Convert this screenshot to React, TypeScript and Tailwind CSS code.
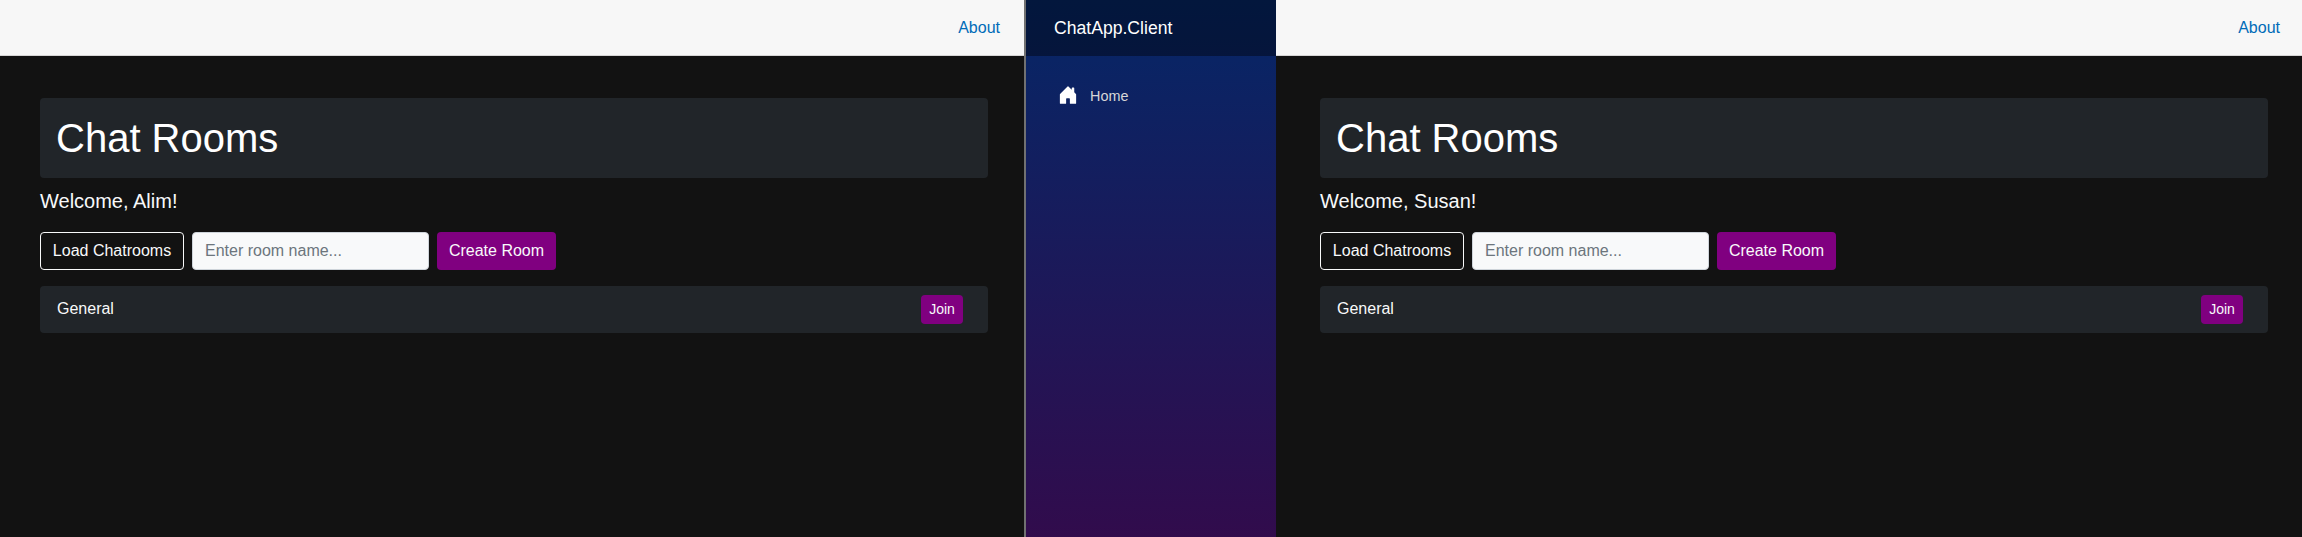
import React from "react";

function TopBar({ className }: { className: string }) {
  return (
    <header
      className={`flex h-14 shrink-0 items-center justify-end border-b border-[#d6d5d5] bg-[#f7f7f7] ${className}`}
    >
      <a href="#" className="text-base text-[#006bb7]">
        About
      </a>
    </header>
  );
}

function ChatRooms({ user, className }: { user: string; className: string }) {
  return (
    <div className={`pt-[42px] text-[#f8f9fa] ${className}`}>
      <div className="w-[948px]">
        <div className="rounded bg-[#212529] p-4">
          <h1 className="text-[40px] leading-[48px] text-white">Chat Rooms</h1>
        </div>
        <h5 className="mt-[11px] text-xl leading-6">Welcome, {user}!</h5>
        <div className="mt-[19px] flex gap-2">
          <button className="h-[38px] w-36 rounded border border-[#f8f9fa] text-base leading-6">
            Load Chatrooms
          </button>
          <input
            type="text"
            placeholder="Enter room name..."
            className="h-[38px] w-[237px] rounded border border-[#ced4da] bg-[#f8f9fa] px-3 text-base text-[#212529] placeholder:text-[#6c757d]"
          />
          <button className="h-[38px] w-[119px] rounded bg-[#800080] text-base leading-6">
            Create Room
          </button>
        </div>
        <ul className="mt-4">
          <li className="flex h-[47px] items-center justify-between rounded bg-[#212529] pr-[25px] pl-[17px]">
            <span className="pb-0.5 text-base">General</span>
            <button className="h-[29px] w-[42px] rounded bg-[#800080] pb-px text-sm leading-5">
              Join
            </button>
          </li>
        </ul>
      </div>
    </div>
  );
}

function Sidebar() {
  return (
    <nav className="w-[250px] shrink-0 bg-[linear-gradient(180deg,#052767_0px,#3a0647_643px)]">
      <div className="flex h-14 items-center bg-black/40 pl-7">
        <a href="#" className="text-[17.6px] text-white">
          ChatApp.Client
        </a>
      </div>
      <a href="#" className="mt-4 flex h-12 items-center pl-8 text-[#d7d7d7]">
        <svg
          viewBox="0 0 16 16"
          className="mr-3 -mt-0.5 h-5 w-5 fill-white"
        >
          <path d="M6.5 14.5v-3.505c0-.245.25-.495.5-.495h2c.25 0 .5.25.5.5v3.5a.5.5 0 0 0 .5.5h4a.5.5 0 0 0 .5-.5v-7a.5.5 0 0 0-.146-.354L13 5.793V2.5a.5.5 0 0 0-.5-.5h-1a.5.5 0 0 0-.5.5v1.293L8.354 1.146a.5.5 0 0 0-.708 0l-6 6A.5.5 0 0 0 1.5 7.5v7a.5.5 0 0 0 .5.5h4a.5.5 0 0 0 .5-.5Z" />
        </svg>
        <span className="pt-0.5 text-[14.4px]">Home</span>
      </a>
    </nav>
  );
}

export default function App() {
  return (
    <div className="flex h-[537px] w-[2302px] overflow-hidden bg-[#121212] font-['Liberation_Sans',Arial,sans-serif]">
      <main className="w-[1024px] shrink-0">
        <TopBar className="pr-6" />
        <ChatRooms user="Alim" className="pl-10" />
      </main>
      <div className="w-0.5 shrink-0 bg-[#717171]" />
      <Sidebar />
      <main className="w-[1026px] shrink-0">
        <TopBar className="pr-[22px]" />
        <ChatRooms user="Susan" className="pl-11" />
      </main>
    </div>
  );
}
